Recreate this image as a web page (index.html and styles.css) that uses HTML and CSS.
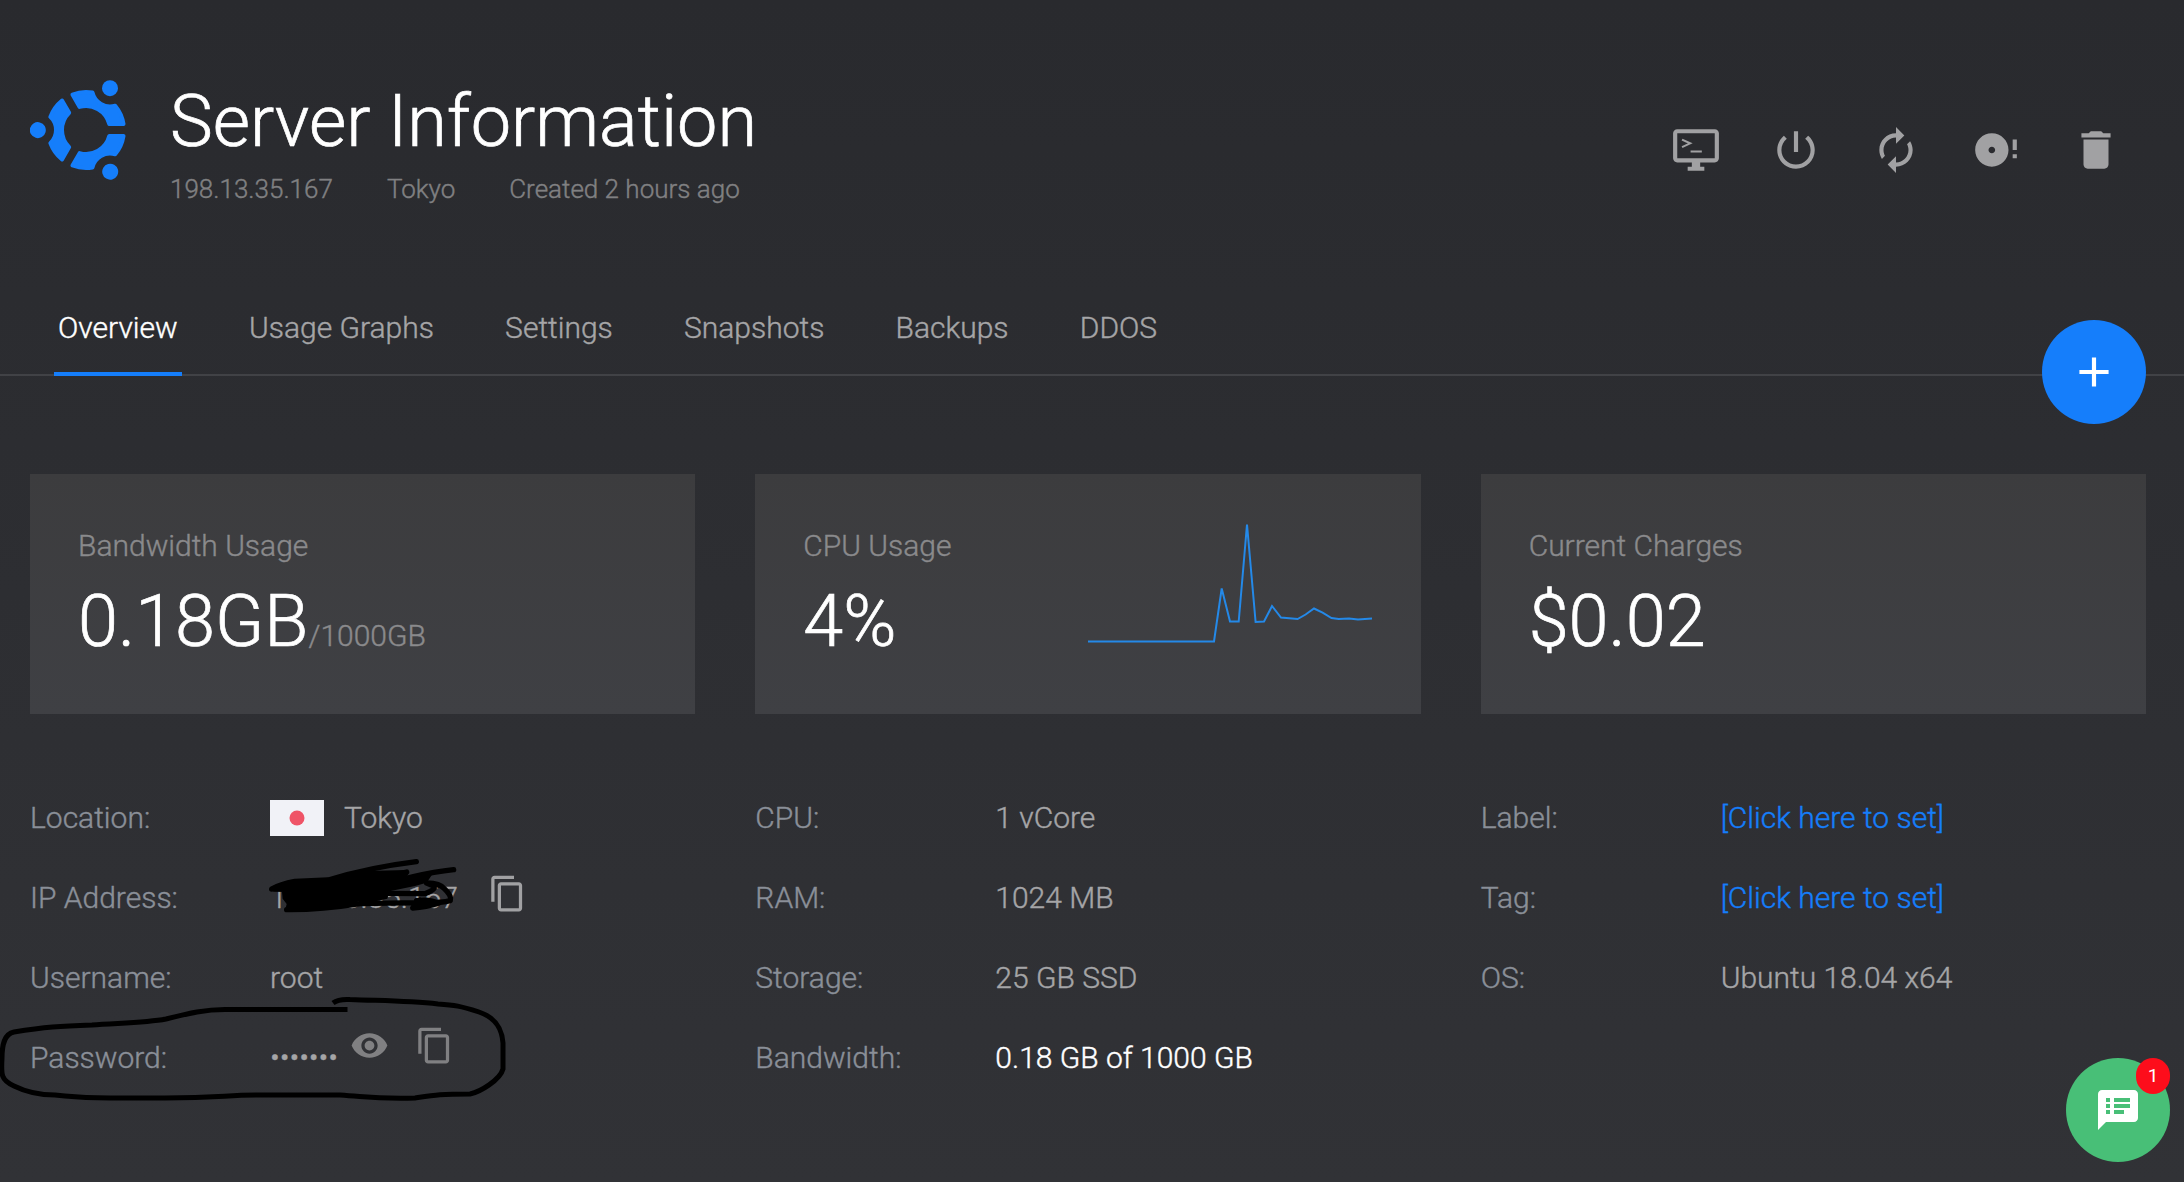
FILE: index.html
```html
<!DOCTYPE html>
<html lang="en">
<head>
<meta charset="utf-8">
<title>Server Information</title>
<link rel="stylesheet" href="styles.css">
</head>
<body>
<header class="header">
  <svg class="logo" viewBox="-56 -52 100 104">
    <defs>
      <g id="arm">
        <path class="logo-arc" d="M23.24-6L37.52-6A38 38 0 0 0 29.19-24.33A18 18 0 0 1 6.48-37.44A38 38 0 0 0-13.57-35.49L-6.42-23.12A24 24 0 0 1 23.24-6Z"/>
        <circle cx="24" cy="-41.8" r="8"/>
      </g>
    </defs>
    <use href="#arm"/><use href="#arm" transform="rotate(120)"/><use href="#arm" transform="rotate(240)"/>
  </svg>
  <div class="heading">
    <h1 class="title">Server Information</h1>
    <div class="meta"><span>198.13.35.167</span><span>Tokyo</span><span>Created 2 hours ago</span></div>
  </div>
  <div class="actions">
    <svg class="action" viewBox="0 0 24 24"><path d="M21 2H3c-1.1 0-2 .9-2 2v12c0 1.1.9 2 2 2h7v2H8v2h8v-2h-2v-2h7c1.1 0 2-.9 2-2V4c0-1.1-.9-2-2-2zm0 14H3V4h18v12z"/><path class="prompt" d="M5.3 7L9.2 8.8L5.3 10.6M9.4 12.7H14.8"/></svg>
    <svg class="action" viewBox="0 0 24 24"><path d="M13 3h-2v10h2V3zm4.83 2.17l-1.42 1.42C17.99 7.86 19 9.81 19 12c0 3.87-3.13 7-7 7s-7-3.13-7-7c0-2.19 1.01-4.14 2.58-5.42L6.17 5.17C4.23 6.82 3 9.26 3 12c0 4.97 4.03 9 9 9s9-4.03 9-9c0-2.74-1.23-5.18-3.17-6.83z"/></svg>
    <svg class="action" viewBox="0 0 24 24"><path d="M12 6v3l4-4-4-4v3c-4.42 0-8 3.58-8 8 0 1.57.46 3.03 1.24 4.26L6.7 14.8c-.45-.83-.7-1.79-.7-2.8 0-3.31 2.69-6 6-6zm6.76 1.74L17.3 9.2c.44.84.7 1.79.7 2.8 0 3.31-2.69 6-6 6v-3l-4 4 4 4v-3c4.42 0 8-3.58 8-8 0-1.57-.46-3.03-1.24-4.26z"/></svg>
    <svg class="action" viewBox="0 0 24 24"><path d="M20 16h2v-2h-2v2zm0-9v5h2V7h-2zM10 4c-4.42 0-8 3.58-8 8s3.58 8 8 8 8-3.58 8-8-3.58-8-8-8zm0 9.6c-.88 0-1.6-.72-1.6-1.6s.72-1.6 1.6-1.6 1.6.72 1.6 1.6-.72 1.6-1.6 1.6z"/></svg>
    <svg class="action" viewBox="0 0 24 24"><path d="M6 19c0 1.1.9 2 2 2h8c1.1 0 2-.9 2-2V7H6v12zM19 4h-3.500l-1-1h-5l-1 1H5v2h14V4z"/></svg>
  </div>
</header>

<nav class="tabs">
  <a class="tab tab-active">Overview</a>
  <a class="tab">Usage Graphs</a>
  <a class="tab">Settings</a>
  <a class="tab">Snapshots</a>
  <a class="tab">Backups</a>
  <a class="tab">DDOS</a>
  <button class="add" aria-label="Add"><svg class="add-icon" viewBox="0 0 24 24"><path d="M19 13h-6v6h-2v-6H5v-2h6V5h2v6h6v2z"/></svg></button>
</nav>

<main class="grid cards">
  <section class="card">
    <div>
      <div class="card-label">Bandwidth Usage</div>
      <div class="card-value">0.18GB<span class="card-unit">/1000GB</span></div>
    </div>
  </section>
  <section class="card">
    <div>
      <div class="card-label">CPU Usage</div>
      <div class="card-value">4%</div>
    </div>
    <svg class="chart" viewBox="0 0 284 140"><polyline points="0,127.500 126,127.500 133.700,74.500 142,107.500 150.700,107.500 159,10.500 167.600,108 176,107.500 184,92 193,103.500 209.600,105 217.600,100.500 226,94.500 234.600,98.700 243.500,104 250.700,105 261,104.500 270,105.500 284,104.500"/></svg>
  </section>
  <section class="card">
    <div>
      <div class="card-label">Current Charges</div>
      <div class="card-value">$0.02</div>
    </div>
  </section>
</main>

<section class="grid details">
  <dl class="list">
    <div class="row"><dt>Location:</dt><dd><svg class="flag" viewBox="0 0 54 36"><rect width="54" height="36" fill="#f1f2f7"/><circle cx="27" cy="18" r="7.500" fill="#ef5467"/></svg>Tokyo</dd></div>
    <div class="row"><dt>IP Address:</dt><dd><span class="ip">198.13.35.167</span><svg class="copy" viewBox="0 0 24 24"><path d="M16 1H4c-1.1 0-2 .9-2 2v14h2V3h12V1zm3 4H8c-1.1 0-2 .9-2 2v14c0 1.100.9 2 2 2h11c1.100 0 2-.9 2-2V7c0-1.100-.9-2-2-2zm0 16H8V7h11v14z"/></svg></dd></div>
    <div class="row"><dt>Username:</dt><dd>root</dd></div>
    <div class="row"><dt>Password:</dt><dd><span class="dots">•••••••</span><svg class="eye" viewBox="0 0 24 24"><path d="M12 4.500C7 4.500 2.730 7.610 1 12c1.730 4.390 6 7.500 11 7.500s9.270-3.110 11-7.500c-1.730-4.390-6-7.500-11-7.500zM12 17c-2.760 0-5-2.240-5-5s2.240-5 5-5 5 2.240 5 5-2.240 5-5 5zm0-8c-1.660 0-3 1.340-3 3s1.340 3 3 3 3-1.340 3-3-1.340-3-3-3z"/></svg><svg class="copy copy-dim" viewBox="0 0 24 24"><path d="M16 1H4c-1.1 0-2 .9-2 2v14h2V3h12V1zm3 4H8c-1.1 0-2 .9-2 2v14c0 1.100.9 2 2 2h11c1.100 0 2-.9 2-2V7c0-1.100-.9-2-2-2zm0 16H8V7h11v14z"/></svg></dd></div>
  </dl>
  <dl class="list">
    <div class="row"><dt>CPU:</dt><dd>1 vCore</dd></div>
    <div class="row"><dt>RAM:</dt><dd>1024 MB</dd></div>
    <div class="row"><dt>Storage:</dt><dd>25 GB SSD</dd></div>
    <div class="row"><dt>Bandwidth:</dt><dd class="strong">0.18 GB of 1000 GB</dd></div>
  </dl>
  <dl class="list">
    <div class="row"><dt>Label:</dt><dd class="link">[Click here to set]</dd></div>
    <div class="row"><dt>Tag:</dt><dd class="link">[Click here to set]</dd></div>
    <div class="row"><dt>OS:</dt><dd>Ubuntu 18.04 x64</dd></div>
  </dl>
</section>

<svg class="ink" viewBox="0 780 560 340">
  <path class="ink-loop" d="M347.500 1009.500H225C205 1009.500 190 1013 166 1019C145 1023 115 1023 92 1025C60 1026 45 1027 14 1032C4 1034 2 1045 2 1058C1 1075 1 1080 14 1086C28 1093 40 1095 55 1095C90 1099 120 1098 165 1098C220 1098 225 1095 258 1095H340C370 1097 375 1099 415 1098C435 1095 440 1094 470 1094C480 1092 500 1080 503 1069V1043C502 1030 497 1018 479 1012C460 1006 455 1005 438 1004C410 1001 390 1001 350 999.500C342 999 337 1000 333 1003"/>
  <g transform="translate(260 850) scale(.3333)">
    <path class="ink-fill" d="M66 126L84 116L45 122L32 112L90 90L210 83L290 64L440 60L445 72L440 82L520 68L500 98L465 108L388 124L382 146L350 153L295 155L200 176L75 182L80 162L68 146Z"/>
    <path class="ink-stroke" d="M80 118L35 117Q60 102 105 94L205 90Q330 52 469 35M200 120L440 66M300 125Q470 70 581 59M370 130L495 131Q535 115 518 107L500 99Q540 100 553 116Q576 138 571 152Q540 160 470 158L300 161Q180 180 80 179M470 152Q510 146 535 160Q500 172 458 174L480 150"/>
  </g>
</svg>

<button class="chat" aria-label="Messages">
  <svg class="chat-icon" viewBox="0 0 24 24"><path d="M20 2H4c-1.100 0-1.990.9-1.990 2L2 22l4-4h14c1.100 0 2-.9 2-2V4c0-1.100-.9-2-2-2zM8 14H6v-2h2v2zm0-3H6V9h2v2zm0-3H6V6h2v2zm7 6h-5v-2h5v2zm3-3h-8V9h8v2zm0-3h-8V6h8v2z"/></svg>
  <span class="badge">1</span>
</button>
</body>
</html>
```
FILE: styles.css
```css
* { box-sizing: border-box; }
body {
  margin: 0;
  height: 1182px;
  overflow: hidden;
  position: relative;
  background: linear-gradient(#292a2e, #313236);
  color: #a5a5a7;
  font-family: Roboto, "Liberation Sans", sans-serif;
  font-size: 30px;
  font-weight: 300;
  -webkit-text-stroke: .4px;
}
button { border: 0; padding: 0; font: inherit; }
.header { display: flex; padding: 78px 63px 0 30px; height: 294px; }
.logo { width: 100px; height: 104px; fill: #157efb; }
.logo-arc { stroke: #157efb; stroke-width: 4; stroke-linejoin: round; }
.heading { margin-left: 40px; }
.title { margin: 1px 0 0; color: #fff; font-size: 72px; font-weight: 300; line-height: 86px; -webkit-text-stroke-width: .7px; }
.meta { display: flex; gap: 54px; margin-top: 8px; font-size: 26px; line-height: 32px; color: #808082; }
.actions { display: flex; gap: 50px; margin: 47px 0 0 auto; }
.action { width: 50px; height: 50px; fill: #a1a1a3; }
.prompt { fill: none; stroke: #a1a1a3; stroke-width: 1; }
.tabs { display: flex; position: relative; gap: 63.2px; height: 82px; padding-left: 54px; border-bottom: 2px solid #414246; }
.tab { height: 82px; padding: 0 4px; line-height: 68px; }
.tab-active { color: #fff; border-bottom: 4px solid #157efb; }
.add { position: absolute; right: 38px; top: 26px; width: 104px; height: 104px; border-radius: 50%; background: #157efb; display: grid; place-items: center; }
.add-icon { width: 50px; height: 50px; fill: #fff; }
.grid { display: grid; grid-template-columns: repeat(3, 1fr); gap: 60px; padding: 0 38px 0 30px; }
.cards { margin-top: 98px; }
.card { display: flex; justify-content: space-between; height: 240px; padding: 48px; background: linear-gradient(#3c3c3e, #3f4044); }
.card-label { line-height: 48px; color: #8a8a8c; }
.card-value { color: #fff; font-size: 72px; line-height: 86px; margin-top: 9px; -webkit-text-stroke-width: .7px; }
.card-unit { font-size: 30px; color: #8a8a8c; -webkit-text-stroke-width: .4px; }
.chart { width: 284px; height: 140px; margin: -8px 1px 0 0; fill: none; stroke: #2489e8; stroke-width: 2; }
.details { margin-top: 64px; }
.list { margin: 0; }
.row { display: flex; height: 80px; padding-bottom: 1px; line-height: 79px; }
dt { width: 240px; color: #8a8f98; }
dd { margin: 0; display: flex; align-items: center; }
.strong { color: #fff; }
.link { color: #157efb; }
.flag { width: 54px; height: 36px; margin: 1px 20px 0 0; }
.ip { width: 218px; }
.copy { width: 39px; height: 39px; margin-top: -9px; fill: #a1a1a3; }
.eye { width: 39px; height: 39px; margin: -25px 0 0 14px; fill: #808082; }
.dots { width: 66px; }
.copy-dim { margin: -25px 0 0 26px; fill: #808082; }
/* Freehand marker annotations over the details list */
.ink { position: absolute; left: 0; top: 780px; width: 560px; height: 340px; fill: none; stroke: #000; }
.ink-loop { stroke-width: 5; }
.ink-fill { fill: #000; stroke: none; }
.ink-stroke { stroke-width: 16; stroke-linecap: round; stroke-linejoin: round; }
.chat { position: absolute; left: 2066px; top: 1058px; width: 104px; height: 104px; border-radius: 50%; background: #48bf77; display: grid; place-items: center; }
.chat-icon { width: 48px; height: 48px; fill: #fff; }
.badge { position: absolute; right: 0; top: 0; width: 34px; height: 36px; border-radius: 17px; background: #fd0d1b; color: #fff; font-size: 19px; font-weight: 400; line-height: 36px; text-align: center; -webkit-text-stroke-width: 0; }
```
